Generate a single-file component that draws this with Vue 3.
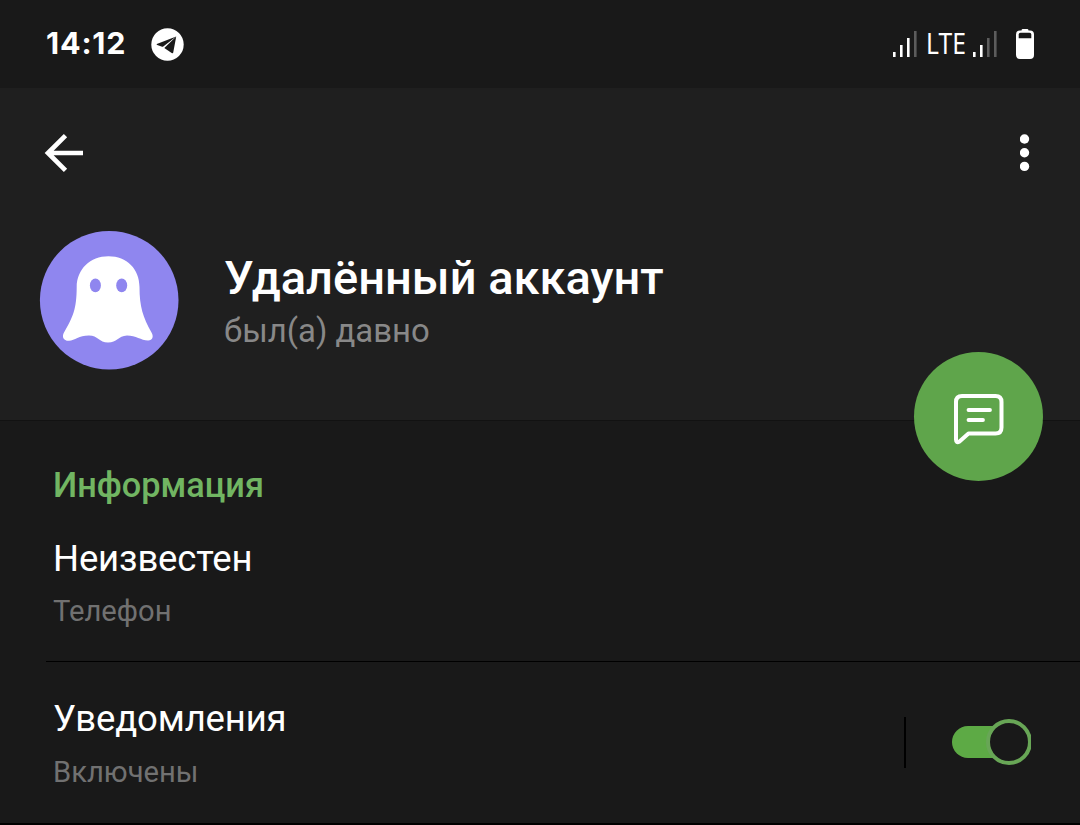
<script setup>
import { ref } from 'vue';

const notificationsOn = ref(true);

const signals = [
    { id: 'sim1', level: 3 },
    { id: 'sim2', level: 2 },
];

const bars = [
    { x: 0, y: 21, height: 5 },
    { x: 7, y: 14, height: 12 },
    { x: 14, y: 7, height: 19 },
    { x: 21, y: 0, height: 26 },
];
</script>

<template>
    <div class="screen">
        <div class="status-bar">
            <span class="clock">14:12</span>
            <svg class="telegram" viewBox="0 0 33 33">
                <circle cx="16.5" cy="16.5" r="16.2" fill="#fff" />
                <path d="M5.8 16 25.2 8.6 12.3 18.6Q11.5 19 10.5 18.6L6.2 17Q5.2 16.5 5.8 16Z" fill="#191919" />
                <path d="M25.2 8.6 22.3 24.3Q21.9 25.8 20.7 25L13.3 19.9Z" fill="#191919" />
            </svg>
            <div class="status-right">
                <svg class="signal" viewBox="0 0 24 26">
                    <rect v-for="(bar, i) in bars" :key="i" :x="bar.x" :y="bar.y" width="2.6" :height="bar.height" :fill="i < signals[0].level ? '#fff' : '#5c5c5c'" />
                </svg>
                <span class="network">LTE</span>
                <svg class="signal" viewBox="0 0 24 26">
                    <rect v-for="(bar, i) in bars" :key="i" :x="bar.x" :y="bar.y" width="2.6" :height="bar.height" :fill="i < signals[1].level ? '#fff' : '#5c5c5c'" />
                </svg>
                <svg class="battery" viewBox="0 0 18 30">
                    <path d="M6.5 0h5q1 0 1 1.5h1.5q4 0 4 4V26q0 4-4 4H4q-4 0-4-4V5.5q0-4 4-4h1.5Q5.5 0 6.5 0Z" fill="#fff" />
                    <path d="M4.5 3.8h9q1.8 0 1.8 1.8V9.2H2.7V5.6q0-1.8 1.8-1.8Z" fill="#191919" />
                </svg>
            </div>
        </div>

        <div class="header">
            <div class="toolbar">
                <svg class="back" viewBox="0 0 40 40">
                    <path d="M21.5 2.7 4 20 21.5 37.3M4 20h35" fill="none" stroke="#fff" stroke-width="4.7" />
                </svg>
                <svg class="more" viewBox="0 0 10 38">
                    <circle cx="4.5" cy="5" r="4.7" fill="#fff" />
                    <circle cx="4.5" cy="18.7" r="4.7" fill="#fff" />
                    <circle cx="4.5" cy="32.4" r="4.7" fill="#fff" />
                </svg>
            </div>
            <div class="profile">
                <svg class="avatar" viewBox="0 0 160 160">
                    <circle cx="79.2" cy="80.2" r="69.3" fill="#8f86ef" />
                    <path d="M78.5 36.2C60 36.2 47 49 46.7 67C46.6 89 43 97 34 112.5C31.5 117 33.5 121 39 120.8C45 120.5 49 115.5 59 115.6C68 115.7 69 122.5 78 122.6C87 122.5 88 115.7 97 115.4C106 115.4 111 120.2 118 120.4C122.5 120.5 124 116.5 121.5 112.5C113 97 109.5 87 109.5 67C109.5 49 97 36.2 78.5 36.2Z" fill="#fff" />
                    <ellipse cx="65.4" cy="65.4" rx="5.5" ry="6.9" fill="#8f86ef" />
                    <ellipse cx="91.7" cy="65.4" rx="5.5" ry="6.9" fill="#8f86ef" />
                </svg>
                <div class="profile-text">
                    <h1 class="name">Удалённый аккаунт</h1>
                    <p class="last-seen">был(а) давно</p>
                </div>
            </div>
            <button class="fab" aria-label="Написать">
                <svg viewBox="0 0 52 52">
                    <path d="M9 3H42.5Q48.5 3 48.5 9V34.5Q48.5 40.5 42.5 40.5H15.5L6.5 48.5Q3 50.5 3 46.5V9Q3 3 9 3Z" fill="none" stroke="#fff" stroke-width="4" stroke-linejoin="round" />
                    <path d="M15.5 17H37M15.5 27H30" fill="none" stroke="#fff" stroke-width="3.8" stroke-linecap="round" />
                </svg>
            </button>
        </div>

        <div class="info">
            <h2 class="section-title">Информация</h2>
            <div class="cell">
                <p class="value">Неизвестен</p>
                <p class="label">Телефон</p>
            </div>
        </div>
        <div class="divider"></div>

        <div class="notifications">
            <div class="cell">
                <p class="value">Уведомления</p>
                <p class="label">{{ notificationsOn ? 'Включены' : 'Выключены' }}</p>
            </div>
            <div class="separator"></div>
            <svg class="toggle" viewBox="0 0 80 48" @click="notificationsOn = !notificationsOn">
                <rect x="1" y="8" width="72" height="32" rx="16" fill="#5daa45" />
                <circle cx="58" cy="24" r="21" fill="#191919" stroke="#68a656" stroke-width="4" />
            </svg>
        </div>
    </div>
</template>

<style>
body {
    background: #000;
    overflow: hidden;
}
</style>

<style scoped>
.screen {
    width: 1080px;
    height: 825px;
    overflow: hidden;
    background: #000;
    color: #fff;
    font-family: Roboto, "Liberation Sans", sans-serif;
}

h1, h2, p {
    margin: 0;
}

svg {
    display: block;
    flex-shrink: 0;
}

.status-bar {
    display: flex;
    align-items: center;
    box-sizing: border-box;
    height: 88px;
    padding: 0 46px;
    background: #191919;
}

.clock {
    width: 105px;
    padding-bottom: 2px;
    font-family: Inter, sans-serif;
    font-size: 30.5px;
    font-weight: 700;
    line-height: 84px;
    letter-spacing: 0.8px;
}

.telegram {
    width: 33px;
    height: 33px;
}

.status-right {
    display: flex;
    align-items: center;
    margin-left: auto;
}

.signal {
    width: 24px;
    height: 26px;
}

.network {
    width: 47px;
    margin-left: 9px;
    padding-bottom: 2px;
    font-family: "Noto Sans", sans-serif;
    font-size: 29px;
    line-height: 84px;
    transform: scaleX(0.85);
    transform-origin: left;
}

.battery {
    width: 18px;
    height: 30px;
    margin-left: 19px;
}

.header {
    position: relative;
    box-sizing: border-box;
    height: 332px;
    padding-top: 45px;
    background: #1f1f1f;
}

.toolbar {
    display: flex;
    justify-content: space-between;
    padding: 0 50px 0 44px;
}

.back {
    width: 40px;
    height: 40px;
}

.more {
    width: 10px;
    height: 38px;
    margin-top: 1px;
}

.profile {
    display: flex;
    margin-top: 47px;
    padding-left: 30px;
}

.avatar {
    width: 160px;
    height: 160px;
}

.profile-text {
    padding: 30px 0 0 34px;
}

.name {
    font-size: 47px;
    font-weight: 500;
    line-height: 56px;
}

.last-seen {
    margin-top: 5px;
    color: #888;
    font-size: 32.9px;
    line-height: 40px;
}

.fab {
    position: absolute;
    top: 264px;
    right: 37px;
    z-index: 1;
    display: flex;
    align-items: center;
    justify-content: center;
    width: 129px;
    height: 129px;
    padding: 5px 0 0;
    border: 0;
    border-radius: 50%;
    background: #5fa54b;
}

.fab svg {
    width: 52px;
    height: 52px;
}

.info {
    box-sizing: border-box;
    height: 241px;
    padding: 44px 53px 0;
    border-top: 1px solid #121212;
    background: #191919;
}

.section-title {
    margin-bottom: 32px;
    color: #71b562;
    font-size: 34.3px;
    font-weight: 500;
    line-height: 40px;
}

.value {
    font-size: 36.5px;
    line-height: 44px;
    letter-spacing: -0.15px;
}

.label {
    margin-top: 12px;
    color: #717171;
    font-size: 29.2px;
    line-height: 36px;
}

.divider {
    height: 1px;
    border-left: 46px solid #191919;
}

.notifications {
    display: flex;
    box-sizing: border-box;
    height: 161px;
    padding: 35px 49px 0 53px;
    background: #191919;
}

.notifications .label {
    margin-top: 13px;
}

.separator {
    width: 2px;
    height: 51px;
    margin: 20px 45px 0 auto;
    background: #000;
}

.toggle {
    width: 80px;
    height: 48px;
    margin-top: 21px;
}
</style>
